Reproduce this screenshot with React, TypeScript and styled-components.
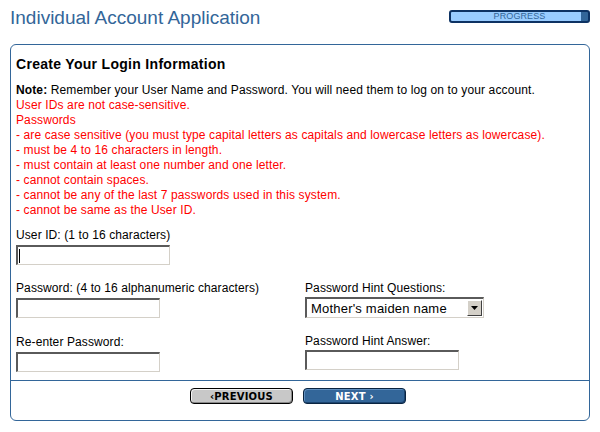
import React from 'react'
import styled, { createGlobalStyle } from 'styled-components'

const GlobalStyle = createGlobalStyle`
  body {
    margin: 0;
    background: #fff;
    font-family: "Liberation Sans", Arial, sans-serif;
    color: #000;
  }
`

const Page = styled.div`
  width: 600px;
  height: 432px;
  overflow: hidden;
`
const Header = styled.div`
  display: flex;
  justify-content: space-between;
  align-items: flex-start;
  height: 44px;
  padding: 0 10px;
  box-sizing: border-box;
`
const Title = styled.h1`
  margin: 7px 0 0;
  font-size: 19px;
  font-weight: normal;
  line-height: 22px;
  color: #336699;
`
const Progress = styled.div`
  margin-top: 10px;
  width: 141px;
  height: 13px;
  box-sizing: border-box;
  border: 2px solid #0d3263;
  border-radius: 3px;
  background: linear-gradient(to left, #336699 7px, #99ccff 7px);
  color: #336699;
  font-size: 9px;
  line-height: 9px;
  text-align: center;
  letter-spacing: 0.1px;
`
const Panel = styled.div`
  margin: 0 10px;
  border: 1px solid #336699;
  border-radius: 6px;
`
const Body = styled.div`
  padding: 11px 5px 8px;
`
const Heading = styled.h2`
  margin: 0;
  font-size: 14px;
  line-height: 17px;
  font-weight: bold;
  letter-spacing: 0.3px;
`
const Notes = styled.div`
  margin-top: 10px;
  font-size: 12px;
  line-height: 15px;
  letter-spacing: 0.12px;
`
const Line = styled.div<{ $warn?: boolean }>`
  color: ${(p) => (p.$warn ? '#ff0000' : '#000')};
`
const Field = styled.div<{ $top?: number }>`
  display: flex;
  flex-direction: column;
  align-items: flex-start;
  margin-top: ${(p) => p.$top ?? 0}px;
`
const Label = styled.label<{ $gap: number }>`
  font-size: 12px;
  line-height: 15px;
  letter-spacing: 0.1px;
  margin-bottom: ${(p) => p.$gap}px;
`
const TextInput = styled.input<{ $width: number; $caret?: boolean }>`
  width: ${(p) => p.$width}px;
  height: 20px;
  box-sizing: border-box;
  margin: 0;
  padding: 0 3px;
  border-top: 2px solid #5a5a5a;
  border-left: 2px solid #5a5a5a;
  border-right: 1px solid #d4d0c8;
  border-bottom: 1px solid #d4d0c8;
  background: ${(p) =>
    p.$caret
      ? 'linear-gradient(#000, #000) no-repeat 1px 2px / 1px 14px, #fff'
      : '#fff'};
  outline: none;
  font: 12px "Liberation Sans", Arial, sans-serif;
`
const Columns = styled.div`
  display: flex;
  margin-top: 16px;
`
const Column = styled.div<{ $width?: number }>`
  flex: ${(p) => (p.$width ? `0 0 ${p.$width}px` : '1 1 auto')};
`
const Select = styled.div`
  display: flex;
  align-items: center;
  justify-content: space-between;
  width: 179px;
  height: 21px;
  box-sizing: border-box;
  padding: 0 1px 0 4px;
  border-top: 2px solid #5a5a5a;
  border-left: 2px solid #5a5a5a;
  border-right: 1px solid #d4d0c8;
  border-bottom: 1px solid #d4d0c8;
  font-size: 13px;
  letter-spacing: 0.2px;
`
const Arrow = styled.span`
  display: flex;
  align-items: center;
  justify-content: center;
  width: 15px;
  height: 16px;
  box-sizing: border-box;
  background: #d4d0c8;
  border-top: 1px solid #fff;
  border-left: 1px solid #fff;
  border-right: 1px solid #404040;
  border-bottom: 1px solid #404040;
`
const Footer = styled.div`
  display: flex;
  justify-content: center;
  gap: 10px;
  padding: 7px 4px 16px 0;
  border-top: 1px solid #336699;
`
const NavButton = styled.button<{ $primary?: boolean }>`
  width: 103px;
  height: 16px;
  margin: 0;
  padding: 0;
  box-sizing: border-box;
  border: 1px solid ${(p) => (p.$primary ? '#0a2440' : '#000')};
  border-radius: 4px;
  background: ${(p) => (p.$primary ? '#336699' : '#c8c8c8')};
  box-shadow: ${(p) =>
    p.$primary
      ? 'inset 1px 1px #5f8fbf, inset -1px -1px #1c4470'
      : 'inset 1px 1px #f4f4f4, inset -1px -1px #8a8a8a'};
  color: ${(p) => (p.$primary ? '#fff' : '#000')};
  font: bold 10px "DejaVu Sans", Verdana, sans-serif;
  line-height: 13px;
  letter-spacing: 0.2px;
`

const rules = [
  '- are case sensitive (you must type capital letters as capitals and lowercase letters as lowercase).',
  '- must be 4 to 16 characters in length.',
  '- must contain at least one number and one letter.',
  '- cannot contain spaces.',
  '- cannot be any of the last 7 passwords used in this system.',
  '- cannot be same as the User ID.',
]

const App = () => {
  return (
    <Page>
      <GlobalStyle />
      <Header>
        <Title>Individual Account Application</Title>
        <Progress>PROGRESS</Progress>
      </Header>
      <Panel>
        <Body>
          <Heading>Create Your Login Information</Heading>
          <Notes>
            <Line>
              <b>Note:</b> Remember your User Name and Password. You will need them to log on to
              your account.
            </Line>
            <Line $warn>User IDs are not case-sensitive.</Line>
            <Line $warn>Passwords</Line>
            {rules.map((r) => (
              <Line $warn key={r}>
                {r}
              </Line>
            ))}
          </Notes>
          <Field $top={10}>
            <Label $gap={2}>User ID: (1 to 16 characters)</Label>
            <TextInput $width={154} $caret />
          </Field>
          <Columns>
            <Column $width={289}>
              <Field>
                <Label $gap={2}>Password: (4 to 16 alphanumeric characters)</Label>
                <TextInput $width={144} type="password" />
              </Field>
              <Field $top={17}>
                <Label $gap={2}>Re-enter Password:</Label>
                <TextInput $width={144} type="password" />
              </Field>
            </Column>
            <Column>
              <Field>
                <Label $gap={1}>Password Hint Questions:</Label>
                <Select>
                  <span>Mother's maiden name</span>
                  <Arrow>
                    <svg width="7" height="4" viewBox="0 0 7 4">
                      <polygon points="0,0 7,0 3.5,4" fill="#000" />
                    </svg>
                  </Arrow>
                </Select>
              </Field>
              <Field $top={16}>
                <Label $gap={1}>Password Hint Answer:</Label>
                <TextInput $width={154} />
              </Field>
            </Column>
          </Columns>
        </Body>
        <Footer>
          <NavButton>‹PREVIOUS</NavButton>
          <NavButton $primary>NEXT ›</NavButton>
        </Footer>
      </Panel>
    </Page>
  )
}

export default App
